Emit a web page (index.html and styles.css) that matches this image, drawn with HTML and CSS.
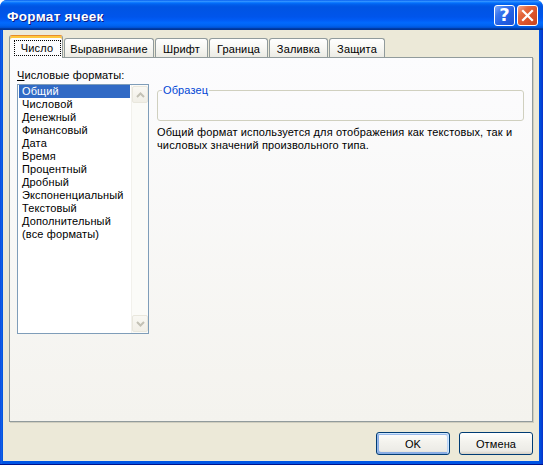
FILE: index.html
```html
<!DOCTYPE html>
<html>
<head>
<meta charset="utf-8">
<link rel="stylesheet" href="styles.css">
</head>
<body>
<div class="window">
  <div class="titlebar">
    <span class="title">Формат ячеек</span>
    <div class="tbtns">
      <div class="tbtn help">?</div>
      <div class="tbtn close">
        <svg width="13" height="13" viewBox="0 0 13 13"><path d="M2 2 L11 11 M11 2 L2 11" stroke="#fff" stroke-width="2.2" stroke-linecap="square"/></svg>
      </div>
    </div>
  </div>
  <div class="client">
    <div class="tabs">
      <div class="tab sel"><span class="focus">Число</span></div>
      <div class="tab t-align">Выравнивание</div>
      <div class="tab t-font">Шрифт</div>
      <div class="tab t-border">Граница</div>
      <div class="tab t-fill">Заливка</div>
      <div class="tab t-prot">Защита</div>
    </div>
    <div class="panel">
      <div class="label"><u>Ч</u>исловые форматы:</div>
      <div class="listbox">
        <ul class="items">
          <li class="selected">Общий</li>
          <li>Числовой</li>
          <li>Денежный</li>
          <li>Финансовый</li>
          <li>Дата</li>
          <li>Время</li>
          <li>Процентный</li>
          <li>Дробный</li>
          <li>Экспоненциальный</li>
          <li>Текстовый</li>
          <li>Дополнительный</li>
          <li>(все форматы)</li>
        </ul>
        <div class="scroll">
          <div class="sbtn">
            <svg width="9" height="6" viewBox="0 0 9 6"><path d="M1 5 L4.5 1.5 L8 5" fill="none" stroke="#C3C1B5" stroke-width="2"/></svg>
          </div>
          <div class="track"></div>
          <div class="sbtn">
            <svg width="9" height="6" viewBox="0 0 9 6"><path d="M1 1 L4.5 4.5 L8 1" fill="none" stroke="#C3C1B5" stroke-width="2"/></svg>
          </div>
        </div>
      </div>
      <div class="right">
        <fieldset class="group">
          <legend>Образец</legend>
          <div class="sample"></div>
        </fieldset>
        <p class="desc">Общий формат используется для отображения как текстовых, так и<br>числовых значений произвольного типа.</p>
      </div>
    </div>
    <div class="buttons">
      <button class="btn default">OK</button>
      <button class="btn">Отмена</button>
    </div>
  </div>
</div>
</body>
</html>
```

FILE: styles.css
```css
* { box-sizing: border-box; }
html, body { margin: 0; padding: 0; }
body {
  width: 543px;
  height: 465px;
  overflow: hidden;
  background: #ffffff;
  font-family: "Liberation Sans", Arial, sans-serif;
  font-size: 11px;
  letter-spacing: 0.13px;
  color: #000;
}
.window {
  width: 543px;
  height: 465px;
  display: flex;
  flex-direction: column;
  background: linear-gradient(to right, #0839D5 0px, #166AEE 1px, #0855DD 2px, #0055E5 3px, #0055E5 539px, #0048D8 541px, #0831C9 543px);
  border-radius: 7px 7px 0 0;
  overflow: hidden;
  border-bottom: 1px solid #00138C;
}
.titlebar {
  height: 30px;
  flex: none;
  display: flex;
  align-items: center;
  justify-content: space-between;
  padding: 0 5px 0 7px;
  background: linear-gradient(to bottom, #0058ee 0%, #3593ff 4%, #288eff 6%, #127dff 8%, #036ffc 10%, #0262ee 14%, #0057e5 20%, #0054e3 24%, #0055eb 56%, #005bf5 66%, #026afe 76%, #0062ef 86%, #0052d6 92%, #0040ab 94%, #003092 100%);
}
.title {
  color: #fff;
  font-weight: bold;
  font-size: 13.5px;
  letter-spacing: 0.3px;
  text-shadow: 1px 1px 0 #0A1883;
  padding-top: 2px;
}
.tbtns { display: flex; gap: 2px; }
.tbtn {
  width: 21px;
  height: 21px;
  border: 1px solid #fff;
  border-radius: 3px;
  display: flex;
  align-items: center;
  justify-content: center;
  color: #fff;
}
.help {
  background: linear-gradient(135deg, #7FA8F8 0%, #3A76EE 30%, #2360E4 60%, #1D52D4 100%);
  font-family: "DejaVu Sans", sans-serif;
  font-weight: bold;
  font-size: 18px;
  line-height: 1;
  letter-spacing: 0;
}
.close {
  background: linear-gradient(135deg, #F5A88C 0%, #E5693E 30%, #DB532A 60%, #C8441E 100%);
}
.client {
  flex: 1;
  margin: 0 4px 3px 3px;
  background: #ECE9D8;
  display: flex;
  flex-direction: column;
  padding: 5px 6px 6px 6px;
}
.tabs {
  height: 22px;
  flex: none;
  display: flex;
  align-items: flex-end;
  gap: 1px;
  position: relative;
  z-index: 2;
}
.tab {
  height: 19px;
  border: 1px solid #919B9C;
  border-bottom: none;
  border-radius: 3px 3px 0 0;
  background: linear-gradient(to bottom, #FFFFFF 0%, #F7F7F3 50%, #ECEBE5 100%);
  display: flex;
  align-items: center;
  justify-content: center;
  white-space: nowrap;
  padding-top: 1px;
}
.tab.sel {
  width: 54px;
  height: 23px;
  margin-bottom: -1px;
  background: #FCFCFE;
  border-top: 1px solid #E68B2C;
  box-shadow: inset 0 2px 0 #FFC73C;
  padding-top: 3px;
  align-items: stretch;
}
.focus {
  display: flex;
  align-items: center;
  justify-content: center;
  width: 47px;
  margin: 1px 0 2px 2px;
  border: 1px dotted #000;
}
.t-align { width: 90px; }
.t-font { width: 53px; }
.t-border { width: 59px; }
.t-fill { width: 59px; }
.t-prot { width: 56px; }
.panel {
  flex: 1;
  border: 1px solid #919B9C;
  box-shadow: 1px 1px 0 #D0CEBF;
  background: linear-gradient(to bottom, #FCFCFE 0%, #F4F3EE 100%);
  display: grid;
  grid-template-columns: 132px 367px;
  grid-template-rows: 13px auto;
  column-gap: 8px;
  row-gap: 2px;
  align-content: start;
  padding: 11px 0 0 7px;
}
.label {
  grid-column: 1;
  grid-row: 1;
  line-height: 13px;
  white-space: nowrap;
}
.listbox {
  grid-column: 1;
  grid-row: 2;
  width: 132px;
  height: 250px;
  border: 1px solid #7F9DB9;
  background: #fff;
  display: flex;
}
.items {
  list-style: none;
  margin: 0;
  padding: 0;
  width: 113px;
}
.items li {
  height: 13px;
  line-height: 13px;
  margin: 0 1px 0 1px;
  padding-left: 3px;
  white-space: nowrap;
}
.items li.selected {
  background: #316AC5;
  color: #fff;
}
.scroll {
  width: 17px;
  display: flex;
  flex-direction: column;
  background: #FBFBF8;
  border-left: 1px solid #F2F1EC;
}
.sbtn {
  height: 17px;
  flex: none;
  margin: 1px 0;
  border: 1px solid #E9E7DD;
  border-radius: 2px;
  background: linear-gradient(to bottom, #F9F8F3 0%, #F1EFE7 100%);
  display: flex;
  align-items: center;
  justify-content: center;
}
.track { flex: 1; }
.right {
  grid-column: 2;
  grid-row: 2;
}
.group {
  margin: 0;
  padding: 0 0 0 4px;
  border: 1px solid #D0D0BF;
  border-radius: 3px;
}
.group legend {
  padding: 0 1px;
  line-height: 13px;
  color: #0046D5;
}
.sample { height: 23px; }
.desc {
  margin: 5px 0 0 0;
  line-height: 13px;
  white-space: nowrap;
}
.buttons {
  flex: none;
  display: flex;
  justify-content: flex-end;
  gap: 9px;
  margin-top: 10px;
  padding-right: 0;
}
.btn {
  width: 74px;
  height: 23px;
  font-family: "Liberation Sans", Arial, sans-serif;
  font-size: 11px;
  letter-spacing: 0.13px;
  color: #000;
  border: 1px solid #003C74;
  border-radius: 3px;
  background: linear-gradient(to bottom, #FFFFFF 0%, #F4F3EE 40%, #ECEBE6 85%, #D6D0C5 100%);
  padding: 0;
}
.btn.default {
  box-shadow: inset -1px 1px #CEE7FF, inset 1px 2px #98B8EA, inset -2px 2px #BCD4F6, inset 1px -1px #89ADE4, inset 2px -2px #89ADE4;
}
```
